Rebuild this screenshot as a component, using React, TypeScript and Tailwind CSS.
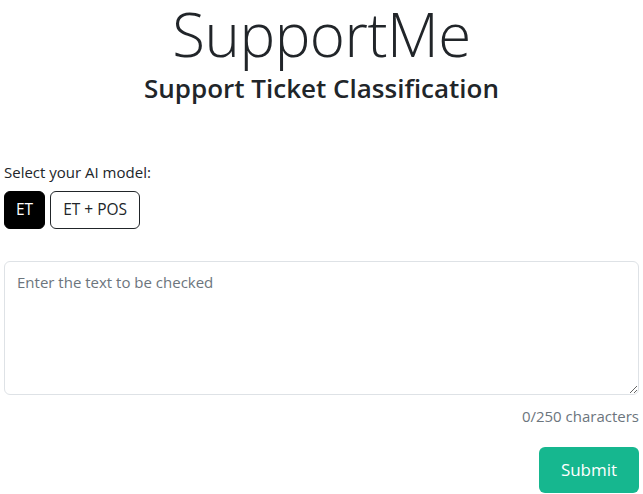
import { useState } from "react";

export default function App() {
  const [model, setModel] = useState("ET");
  const [text, setText] = useState("");

  return (
    <div
      className="min-h-screen bg-white text-[#212529] px-[4px]"
      style={{ fontFamily: '"Open Sans", "Noto Sans", sans-serif' }}
    >
      {/* Header */}
      <header className="text-center">
        <h1 className="text-[60px] font-light leading-[66px] tracking-[-0.5px] pt-[1px]">SupportMe</h1>
        <h2 className="text-[26px] font-semibold leading-[34px] mt-[4px]">
          Support Ticket Classification
        </h2>
      </header>

      {/* Model picker */}
      <div className="mt-[56px]">
        <p className="text-[15px] leading-[22px]">Select your AI model:</p>
        <div className="flex gap-[5px] mt-[8px]">
          {["ET", "ET + POS"].map((m) => (
            <button
              key={m}
              onClick={() => setModel(m)}
              className={
                model === m
                  ? "h-[38px] px-[11px] rounded-[6px] border border-black bg-black text-white text-[15.5px]"
                  : "h-[38px] px-[12px] rounded-[6px] border border-[#212529] bg-white text-[#212529] text-[15.5px]"
              }
            >
              {m}
            </button>
          ))}
        </div>
      </div>

      {/* Text input */}
      <div className="mt-[32px]">
        <textarea
          value={text}
          maxLength={250}
          onChange={(e) => setText(e.target.value)}
          placeholder="Enter the text to be checked"
          className="block w-[635px] h-[134px] rounded-[6px] border border-[#dee2e6] px-[12px] py-[8px] text-[15px] leading-[24px] placeholder:text-[#6c757d] outline-none"
        />
        <p className="text-right text-[15px] text-[#6c757d] mt-[9px] leading-[24px]">
          {text.length}/250 characters
        </p>
      </div>

      <div className="flex justify-end mt-[19px]">
        <button className="h-[46px] w-[100px] rounded-[6px] bg-[#16b78f] text-white text-[17px]">
          Submit
        </button>
      </div>
    </div>
  );
}
